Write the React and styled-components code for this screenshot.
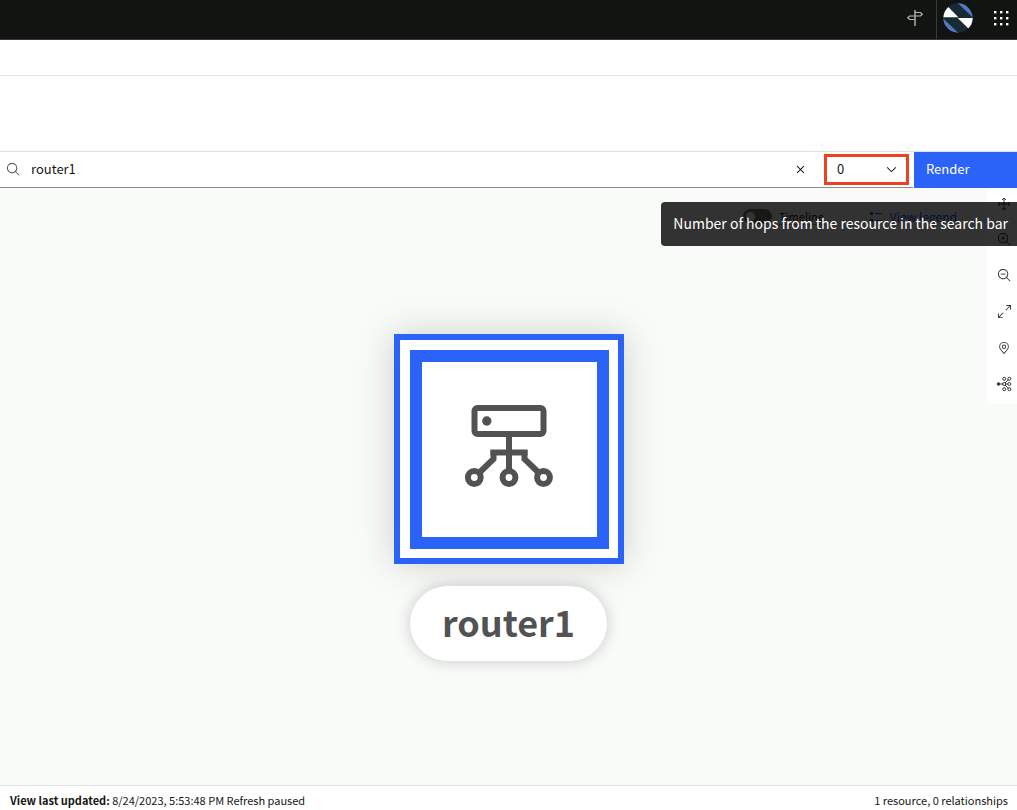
import React from "react";
import styled, { createGlobalStyle } from "styled-components";

const GlobalStyle = createGlobalStyle`
  *, *::before, *::after { box-sizing: border-box; }
  body {
    margin: 0;
    background: #fff;
    color: #161616;
    font-family: "Noto Sans CJK JP", "Noto Sans", sans-serif;
    font-size: 12px;
    line-height: 16px;
  }
  button, input, select { font: inherit; color: inherit; }
`;

const Page = styled.div`
  display: flex;
  flex-direction: column;
  min-height: 100vh;
`;

const Header = styled.header`
  display: flex;
  justify-content: flex-end;
  height: 40px;
  background: #111411;
  border-bottom: 1px solid #393939;
`;

const HeaderButton = styled.button`
  display: flex;
  align-items: center;
  justify-content: center;
  width: ${(p) => p.$width}px;
  padding: 0 0 3px;
  border: 0;
  border-right: ${(p) => (p.$divided ? "1px solid #393939" : "0")};
  background: transparent;
  color: #fff;
`;

const AppsButton = styled(HeaderButton)`
  justify-content: flex-end;
  padding-right: 8px;
`;

const Breadcrumbs = styled.nav`
  height: 36px;
  border-bottom: 1px solid #e8e8e8;
`;

const TitleArea = styled.section`
  height: 76px;
  border-bottom: 1px solid #e0e0e0;
`;

const SearchBar = styled.form`
  position: relative;
  display: flex;
  height: 36px;
`;

const SearchFields = styled.div`
  display: flex;
  flex: 1;
  align-items: center;
  min-width: 0;
  padding-right: 4px;
  border-bottom: 1px solid #8d8d8d;
`;

const SearchLabel = styled.label`
  display: flex;
  padding: 0 10px 0 6px;
  color: #525252;
`;

const SearchInput = styled.input`
  flex: 1;
  min-width: 0;
  height: 24px;
  padding: 0 0 2px;
  border: 0;
  outline: 0;
  background: transparent;
  font-size: 13px;
`;

const ClearButton = styled.button`
  display: flex;
  padding: 8px;
  margin-right: 8px;
  border: 0;
  background: transparent;
`;

const HopsField = styled.div`
  position: relative;
  width: 85px;
  height: 31px;
  border: 3px solid #ee4023;

  svg {
    position: absolute;
    top: 5px;
    right: 7px;
    pointer-events: none;
  }
`;

const HopsSelect = styled.select`
  appearance: none;
  width: 100%;
  height: 100%;
  padding: 0 24px 2px 10px;
  border: 0;
  outline: 0;
  background: transparent;
  font-size: 13px;
`;

const RenderButton = styled.button`
  width: 104px;
  padding: 0 12px 2px;
  border: 0;
  border-left: 1px solid #fff;
  background: #2b62f8;
  background-clip: padding-box;
  color: #fff;
  font-size: 13px;
  text-align: left;
`;

const Tooltip = styled.div`
  position: absolute;
  z-index: 2;
  top: 50px;
  right: 0;
  padding: 11px 9px 13px 12px;
  border-radius: 4px 0 0 4px;
  background: rgba(0, 0, 0, 0.8);
  color: #fff;
  font-size: 14px;
  line-height: 20px;
  white-space: nowrap;
`;

const Canvas = styled.main`
  display: grid;
  flex: 1;
  background: #f9fbf9;

  > * { grid-area: 1 / 1; }
`;

const ViewOptions = styled.div`
  display: flex;
  align-items: center;
  align-self: start;
  justify-self: end;
  gap: 46px;
  padding: 20px 60px 0 0;
`;

const ToggleLabel = styled.label`
  display: flex;
  align-items: center;
  gap: 7px;
  font-size: 11px;

  span { border-bottom: 1px dotted #525252; }
`;

const Toggle = styled.input`
  appearance: none;
  display: flex;
  align-items: center;
  width: 29px;
  height: 15px;
  margin: 0;
  padding: 0 3px;
  border-radius: 8px;
  background: #6f7c6f;

  &::before {
    content: "";
    width: 9px;
    height: 9px;
    border-radius: 50%;
    background: #fff;
  }
`;

const LegendLink = styled.a`
  display: flex;
  align-items: center;
  gap: 8px;
  color: #0f4ff0;
  font-size: 12px;
  text-decoration: none;
`;

const Toolbar = styled.div`
  display: flex;
  flex-direction: column;
  align-self: start;
  justify-self: end;
  width: 30px;
  background: #fff;
`;

const ToolButton = styled.button`
  display: flex;
  align-items: center;
  justify-content: center;
  height: 36px;
  padding: 0 0 5px 4px;
  border: 0;
  background: transparent;
  color: #393939;
`;

const Topology = styled.div`
  display: flex;
  flex-direction: column;
  align-items: center;
  justify-content: center;
  gap: 22px;
  padding-top: 22px;
`;

const NodeFrame = styled.div`
  width: 230px;
  height: 230px;
  padding: 10px 9px 9px 10px;
  border: 6px solid #2b62f8;
  background: #fff;
  box-shadow: 0 0 34px rgba(0, 0, 0, 0.18);
`;

const NodeCore = styled.div`
  display: flex;
  align-items: center;
  justify-content: center;
  height: 100%;
  padding-bottom: 8px;
  border: 12px solid #2b62f8;
`;

const NodeLabel = styled.div`
  padding: 11px 32px 16px;
  border-radius: 38px;
  background: #fff;
  box-shadow: 0 0 16px rgba(0, 0, 0, 0.2);
  color: #525252;
  font-size: 36px;
  font-weight: 700;
  line-height: 48px;
`;

const Footer = styled.footer`
  display: flex;
  justify-content: space-between;
  padding: 6px 9px 2px 10px;
  border-top: 1px solid #e0e0e0;
  font-size: 11px;
`;

const Icon = ({ size = 16, box = 32, children }) => (
  <svg width={size} height={size} viewBox={`0 0 ${box} ${box}`} fill="currentColor" aria-hidden="true">
    {children}
  </svg>
);

const LENS =
  "M29 27.586l-7.552-7.552a11.018 11.018 0 1 0-1.414 1.414L27.586 29ZM4 13a9 9 0 1 1 9 9A9.01 9.01 0 0 1 4 13Z";

const SignpostIcon = () => (
  <svg width="18" height="18" viewBox="0 0 18 18" fill="none" stroke="#b4b6b4" aria-hidden="true">
    <path d="M9 1v16" strokeWidth="1.4" />
    <path d="M9 3.500h5.500L16.300 5.200 14.500 7H9M9 7H3.500L1.700 8.700 3.500 10.500H9" strokeWidth="1.200" />
  </svg>
);

const BrandLogo = () => (
  <svg width="30" height="30" viewBox="0 0 90 90" aria-hidden="true">
    <clipPath id="disc"><circle cx="45" cy="45" r="44" /></clipPath>
    <g clipPath="url(#disc)">
      <rect width="90" height="90" fill="#182a33" />
      <path d="M44 0H66L90 30V44Z" fill="#4f7ac2" />
      <path d="M0 46L46 90H24L0 60Z" fill="#4f7ac2" />
      <path d="M0 0H4L46 43H0Z" fill="#fff" />
      <path d="M44 45H90V90Z" fill="#fff" />
    </g>
  </svg>
);

const SwitcherIcon = () => (
  <Icon size={16} box={16}>
    {[1, 7, 13].flatMap((x) =>
      [1, 7, 13].map((y) => <rect key={`${x}-${y}`} x={x} y={y} width="2.400" height="2.400" />)
    )}
  </Icon>
);

const MoveIcon = () => (
  <svg width="14" height="14" viewBox="0 0 14 14" fill="none" stroke="currentColor" aria-hidden="true">
    <path d="M7 1v12M1 7h12M5 3l2-2 2 2M5 11l2 2 2-2M3 5L1 7l2 2M11 5l2 2-2 2" />
  </svg>
);

const NeighborsIcon = () => (
  <svg width="16" height="16" viewBox="0 0 16 16" fill="none" stroke="currentColor" aria-hidden="true">
    <circle cx="2.500" cy="8" r="1.700" fill="currentColor" stroke="none" />
    <path d="M2 8h5M9 7l3.500-3.500M9 9l3.500 3.500M9.500 8h2.500" />
    <circle cx="8.200" cy="8" r="1.500" />
    <circle cx="8.200" cy="2.800" r="1.500" />
    <circle cx="8.200" cy="13.200" r="1.500" />
    <circle cx="13.300" cy="2.800" r="1.500" />
    <circle cx="13.300" cy="8" r="1.500" />
    <circle cx="13.300" cy="13.200" r="1.500" />
  </svg>
);

const RouterIcon = () => (
  <svg width="90" height="84" viewBox="0 0 90 84" fill="none" stroke="#525252" strokeWidth="6" aria-hidden="true">
    <rect x="10.500" y="4" width="69" height="26" rx="3" />
    <circle cx="22.800" cy="17" r="4.700" fill="#525252" stroke="none" />
    <path d="M45 31v36M26.500 48.500h37" />
    <path d="M29.500 46v9L15 69M60.500 46v9L75 69" />
    <circle cx="10.300" cy="73.500" r="6.400" />
    <circle cx="45" cy="73.500" r="6.400" />
    <circle cx="79.500" cy="73.500" r="6.400" />
  </svg>
);

const ListIcon = () => (
  <svg width="12" height="12" viewBox="0 0 12 12" fill="currentColor" aria-hidden="true">
    <path d="M0 1h3v3H0zM0 8h3v3H0zM5 2h7v1H5zM5 9h7v1H5z" />
  </svg>
);

const tools = [
  { name: "Pan", icon: <MoveIcon /> },
  {
    name: "Zoom in",
    icon: <Icon size={15}><path d={LENS} /><path d="M18 12h-4V8h-2v4H8v2h4v4h2v-4h4z" /></Icon>,
  },
  { name: "Zoom out", icon: <Icon size={15}><path d={LENS} /><path d="M8 12h10v2H8z" /></Icon> },
  {
    name: "Fit to screen",
    icon: (
      <Icon size={15}>
        <path d="M20 2v2h6.586L18 12.582 19.414 14 28 5.414V12h2V2zM14 19.416L12.592 18 4 26.586V20H2v10h10v-2H5.414z" />
      </Icon>
    ),
  },
  {
    name: "Locate",
    icon: (
      <Icon size={14}>
        <path d="M16 18a5 5 0 1 1 5-5 5 5 0 0 1-5 5Zm0-8a3 3 0 1 0 3 3 3 3 0 0 0-3-3Z" />
        <path d="M16 30L7.564 20.051l-.348-.451A10.889 10.889 0 0 1 5 13a11 11 0 0 1 22 0 10.884 10.884 0 0 1-2.215 6.597l-.346.450ZM8.813 18.395l.287.374L16 26.908l6.910-8.150.279-.366A8.901 8.901 0 0 0 25 13a9 9 0 1 0-18 0 8.905 8.905 0 0 0 1.813 5.395Z" />
      </Icon>
    ),
  },
  { name: "Show neighbors", icon: <NeighborsIcon /> },
];

export default function App() {
  return (
    <>
      <GlobalStyle />
      <Page>
        <Header>
          <HeaderButton $width={44} $divided aria-label="Tours"><SignpostIcon /></HeaderButton>
          <HeaderButton $width={42} aria-label="Account"><BrandLogo /></HeaderButton>
          <AppsButton $width={38} aria-label="Apps"><SwitcherIcon /></AppsButton>
        </Header>
        <Breadcrumbs />
        <TitleArea />
        <SearchBar onSubmit={(e) => e.preventDefault()}>
          <SearchFields>
            <SearchLabel htmlFor="resource" aria-label="Resource">
              <Icon size={15}><path d={LENS} /></Icon>
            </SearchLabel>
            <SearchInput id="resource" defaultValue="router1" />
            <ClearButton type="button" aria-label="Clear">
              <Icon size={15}>
                <path d="M24 9.400L22.600 8 16 14.600 9.400 8 8 9.400 14.600 16 8 22.600 9.400 24 16 17.400 22.600 24 24 22.600 17.400 16z" />
              </Icon>
            </ClearButton>
            <HopsField>
              <HopsSelect aria-label="Number of hops" aria-describedby="hops-tip" defaultValue="0">
                <option>0</option>
                <option>1</option>
                <option>2</option>
              </HopsSelect>
              <Icon size={15} box={16}><path d="M8 11L3 6l.7-.7L8 9.600l4.300-4.300.7.7z" /></Icon>
            </HopsField>
          </SearchFields>
          <RenderButton>Render</RenderButton>
          <Tooltip id="hops-tip" role="tooltip">Number of hops from the resource in the search bar</Tooltip>
        </SearchBar>
        <Canvas>
          <Topology>
            <NodeFrame>
              <NodeCore><RouterIcon /></NodeCore>
            </NodeFrame>
            <NodeLabel>router1</NodeLabel>
          </Topology>
          <ViewOptions>
            <ToggleLabel>
              <Toggle type="checkbox" />
              <span>Timeline</span>
            </ToggleLabel>
            <LegendLink href="#legend"><ListIcon />View legend</LegendLink>
          </ViewOptions>
          <Toolbar role="toolbar" aria-label="Topology tools">
            {tools.map((tool) => (
              <ToolButton key={tool.name} aria-label={tool.name}>{tool.icon}</ToolButton>
            ))}
          </Toolbar>
        </Canvas>
        <Footer>
          <span><b>View last updated:</b> 8/24/2023, 5:53:48 PM Refresh paused</span>
          <span>1 resource, 0 relationships</span>
        </Footer>
      </Page>
    </>
  );
}
